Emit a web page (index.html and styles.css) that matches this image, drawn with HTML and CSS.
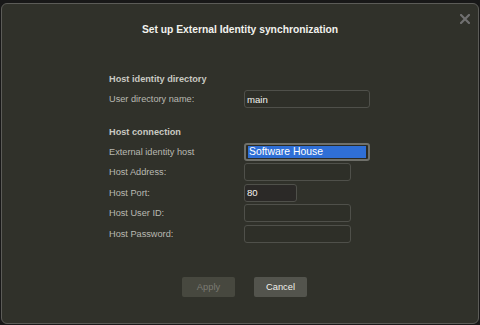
FILE: index.html
```html
<!DOCTYPE html>
<html lang="en">
<head>
  <meta charset="UTF-8">
  <title>Set up External Identity synchronization</title>
  <link rel="stylesheet" href="styles.css">
</head>
<body>

  <!-- DIALOG -->
  <div class="dialog">
    <span class="close">
      <svg width="10" height="10" viewBox="0 0 10 10"><path d="M1 1L9 9M9 1L1 9" stroke="#707070" stroke-width="2.2" stroke-linecap="square"/></svg>
    </span>

    <h1 class="title">Set up External Identity synchronization</h1>

    <div class="form">
      <h2 class="section first">Host identity directory</h2>
      <div class="row">
        <label>User directory name:</label>
        <input type="text" class="field wide" value="main">
      </div>

      <h2 class="section">Host connection</h2>
      <div class="rows">
        <div class="row">
          <label>External identity host</label>
          <div class="field wide picker"><span class="picked">Software House</span></div>
        </div>
        <div class="row">
          <label>Host Address:</label>
          <input type="text" class="field">
        </div>
        <div class="row">
          <label>Host Port:</label>
          <input type="text" class="field short" value="80">
        </div>
        <div class="row">
          <label>Host User ID:</label>
          <input type="text" class="field">
        </div>
        <div class="row">
          <label>Host Password:</label>
          <input type="password" class="field">
        </div>
      </div>
    </div>

    <div class="actions">
      <button class="btn" disabled>Apply</button>
      <button class="btn">Cancel</button>
    </div>
  </div>

</body>
</html>
```

FILE: styles.css
```css
* { margin: 0; padding: 0; box-sizing: border-box; }

html, body {
  height: 100%;
  background: #181818;
  font-family: "Liberation Sans", Arial, sans-serif;
  overflow: hidden;
}

.dialog {
  position: relative;
  margin: 3px 1px 0 1px;
  height: 321px;
  padding-top: 19px;
  background: #30312a;
  border: 1px solid #5c5c58;
  border-radius: 6px;
}

.close {
  position: absolute;
  top: 10px;
  right: 8px;
  width: 10px;
  height: 10px;
  line-height: 0;
}

.title {
  height: 14px;
  line-height: 14px;
  font-size: 10.3px;
  font-weight: bold;
  color: #f2f2ee;
  text-align: center;
}

.form {
  padding-left: 107px;
}

.section {
  height: 12px;
  line-height: 12px;
  margin: 18px 0 5px;
  font-size: 9.2px;
  font-weight: bold;
  color: #c9c9c2;
}

.section.first {
  margin-top: 36px;
}

.rows {
  display: flex;
  flex-direction: column;
  gap: 2.4px;
}

.row {
  display: flex;
  align-items: center;
  height: 18px;
}

.row label {
  width: 135px;
  font-size: 9.2px;
  color: #b9b9b2;
}

.field {
  width: 107px;
  height: 18px;
  padding: 0 2px;
  background: #2e2f28;
  border: 1px solid #4f504a;
  border-radius: 3px;
  color: #f4f4f0;
  font-family: "Liberation Sans", Arial, sans-serif;
  font-size: 9.6px;
  outline: none;
}

.field.wide { width: 126px; }

.field.short {
  width: 53px;
  background: #2b2927;
}

.picker {
  display: flex;
  align-items: center;
  padding: 0 2px;
  border: 2px solid #6f706a;
  background: #2a2b25;
}

.picked {
  flex: 1;
  height: 12px;
  line-height: 12px;
  padding-left: 1px;
  background: #2f6fd6;
  color: #ffffff;
  font-size: 10.4px;
}

.actions {
  display: flex;
  gap: 19px;
  margin: 34px 0 0 180px;
}

.btn {
  width: 53px;
  height: 20px;
  border: none;
  border-radius: 2px;
  background: #53544d;
  color: #f0f0ec;
  font-family: "Liberation Sans", Arial, sans-serif;
  font-size: 9.3px;
}

.btn:disabled {
  background: #47483f;
  color: #7b7b73;
}
```
